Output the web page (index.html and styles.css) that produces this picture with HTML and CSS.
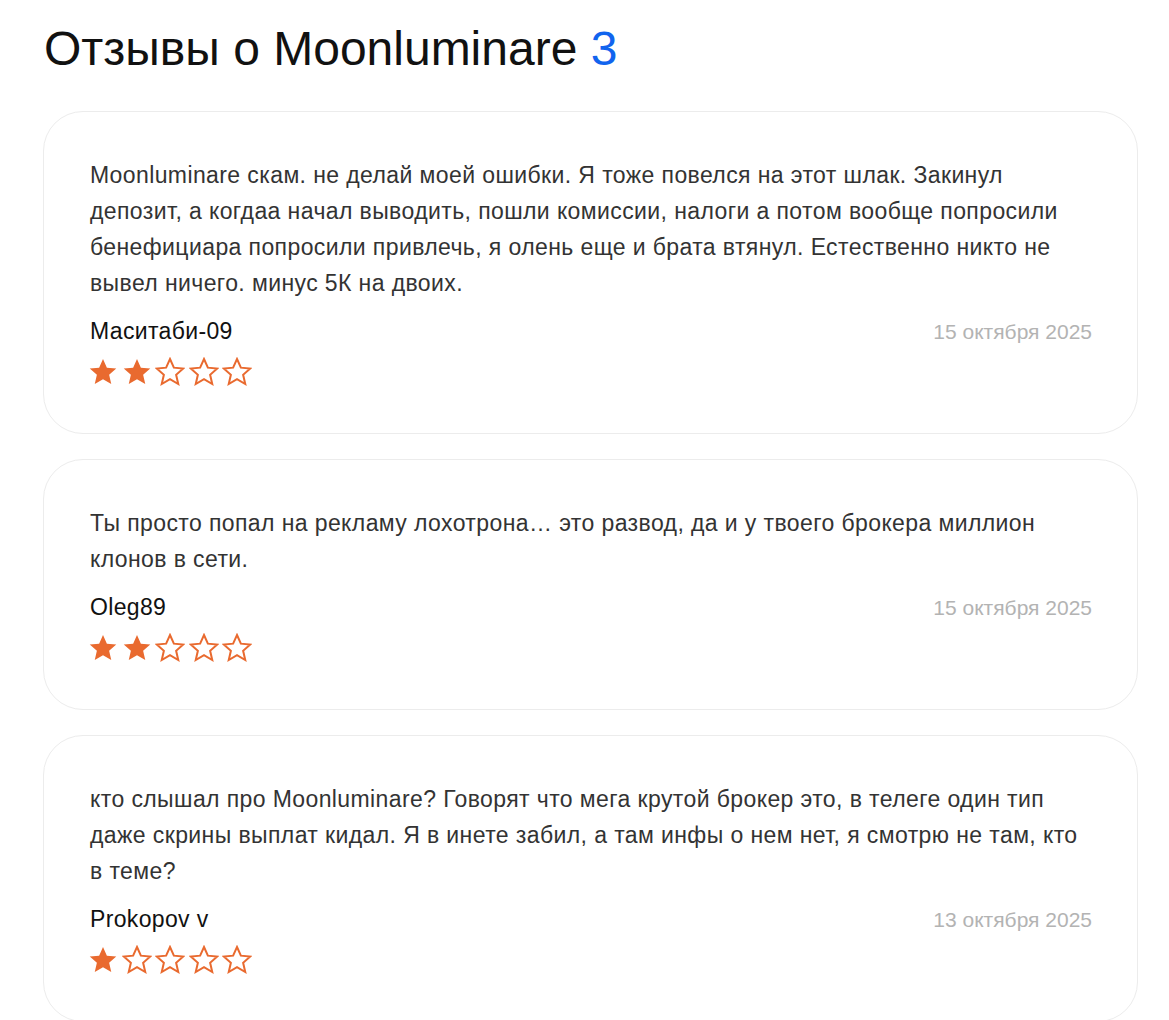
FILE: index.html
```html
<!DOCTYPE html>
<html lang="ru">
<head>
<meta charset="utf-8">
<title>Отзывы о Moonluminare</title>
<link rel="stylesheet" href="styles.css">
</head>
<body>
<svg width="0" height="0" class="defs">
  <defs>
    <symbol id="star" viewBox="0 0 24 24">
      <path d="M12 1.6l3.1 6.9 7.5.7-5.7 5 1.7 7.4L12 17.7l-6.6 3.9 1.7-7.4-5.7-5 7.5-.7z"/>
    </symbol>
  </defs>
</svg>
<main class="page">
  <h1 class="title">Отзывы о Moonluminare <span class="count">3</span></h1>

  <article class="card">
    <p class="text">Moonluminare скам. не делай моей ошибки. Я тоже повелся на этот шлак. Закинул депозит, а когдаа начал выводить, пошли комиссии, налоги а потом вообще попросили бенефициара попросили привлечь, я олень еще и брата втянул. Естественно никто не вывел ничего. минус 5К на двоих.</p>
    <div class="meta">
      <span class="author">Маситаби-09</span>
      <span class="date">15 октября 2025</span>
    </div>
    <div class="stars">
      <svg class="star full"><use href="#star"/></svg>
      <svg class="star full"><use href="#star"/></svg>
      <svg class="star empty"><use href="#star"/></svg>
      <svg class="star empty"><use href="#star"/></svg>
      <svg class="star empty"><use href="#star"/></svg>
    </div>
  </article>

  <article class="card">
    <p class="text">Ты просто попал на рекламу лохотрона… это развод, да и у твоего брокера миллион клонов в сети.</p>
    <div class="meta">
      <span class="author">Oleg89</span>
      <span class="date">15 октября 2025</span>
    </div>
    <div class="stars">
      <svg class="star full"><use href="#star"/></svg>
      <svg class="star full"><use href="#star"/></svg>
      <svg class="star empty"><use href="#star"/></svg>
      <svg class="star empty"><use href="#star"/></svg>
      <svg class="star empty"><use href="#star"/></svg>
    </div>
  </article>

  <article class="card">
    <p class="text">кто слышал про Moonluminare? Говорят что мега крутой брокер это, в телеге один тип даже скрины выплат кидал. Я в инете забил, а там инфы о нем нет, я смотрю не там, кто в теме?</p>
    <div class="meta">
      <span class="author">Prokopov v</span>
      <span class="date">13 октября 2025</span>
    </div>
    <div class="stars">
      <svg class="star full"><use href="#star"/></svg>
      <svg class="star empty"><use href="#star"/></svg>
      <svg class="star empty"><use href="#star"/></svg>
      <svg class="star empty"><use href="#star"/></svg>
      <svg class="star empty"><use href="#star"/></svg>
    </div>
  </article>
</main>
</body>
</html>
```

FILE: styles.css
```css
html, body {
  margin: 0;
  padding: 0;
  background: #fff;
}
body {
  font-family: "Liberation Sans", Arial, sans-serif;
  color: #111;
}
.defs {
  position: absolute;
  width: 0;
  height: 0;
  overflow: hidden;
}
.page {
  padding: 19px 31px 0 43px;
  display: flex;
  flex-direction: column;
  gap: 25px;
}
.title {
  margin: 0 0 8px 1px;
  font-size: 48px;
  font-weight: 400;
  line-height: 59px;
  color: #111;
}
.count {
  color: #1164ee;
}
.card {
  border: 1px solid #ececec;
  border-radius: 40px;
  padding: 45px 45px 46px 46px;
  display: flex;
  flex-direction: column;
}
.text {
  margin: 0;
  font-size: 23px;
  letter-spacing: 0.4px;
  line-height: 36px;
  color: #333;
}
.meta {
  margin-top: 17px;
  display: flex;
  justify-content: space-between;
  align-items: baseline;
}
.author {
  font-size: 23px;
  letter-spacing: 0.35px;
  line-height: 26px;
  color: #111;
}
.date {
  font-size: 21px;
  line-height: 26px;
  color: #b3b3b3;
}
.stars {
  margin: 12px 0 0 -2px;
  display: flex;
  gap: 3.5px;
}
.star {
  width: 30px;
  height: 30px;
}
.star.full {
  fill: #e96a2f;
}
.star.empty {
  fill: none;
  stroke: #e96a2f;
  stroke-width: 1.6;
  stroke-linejoin: miter;
}
```
